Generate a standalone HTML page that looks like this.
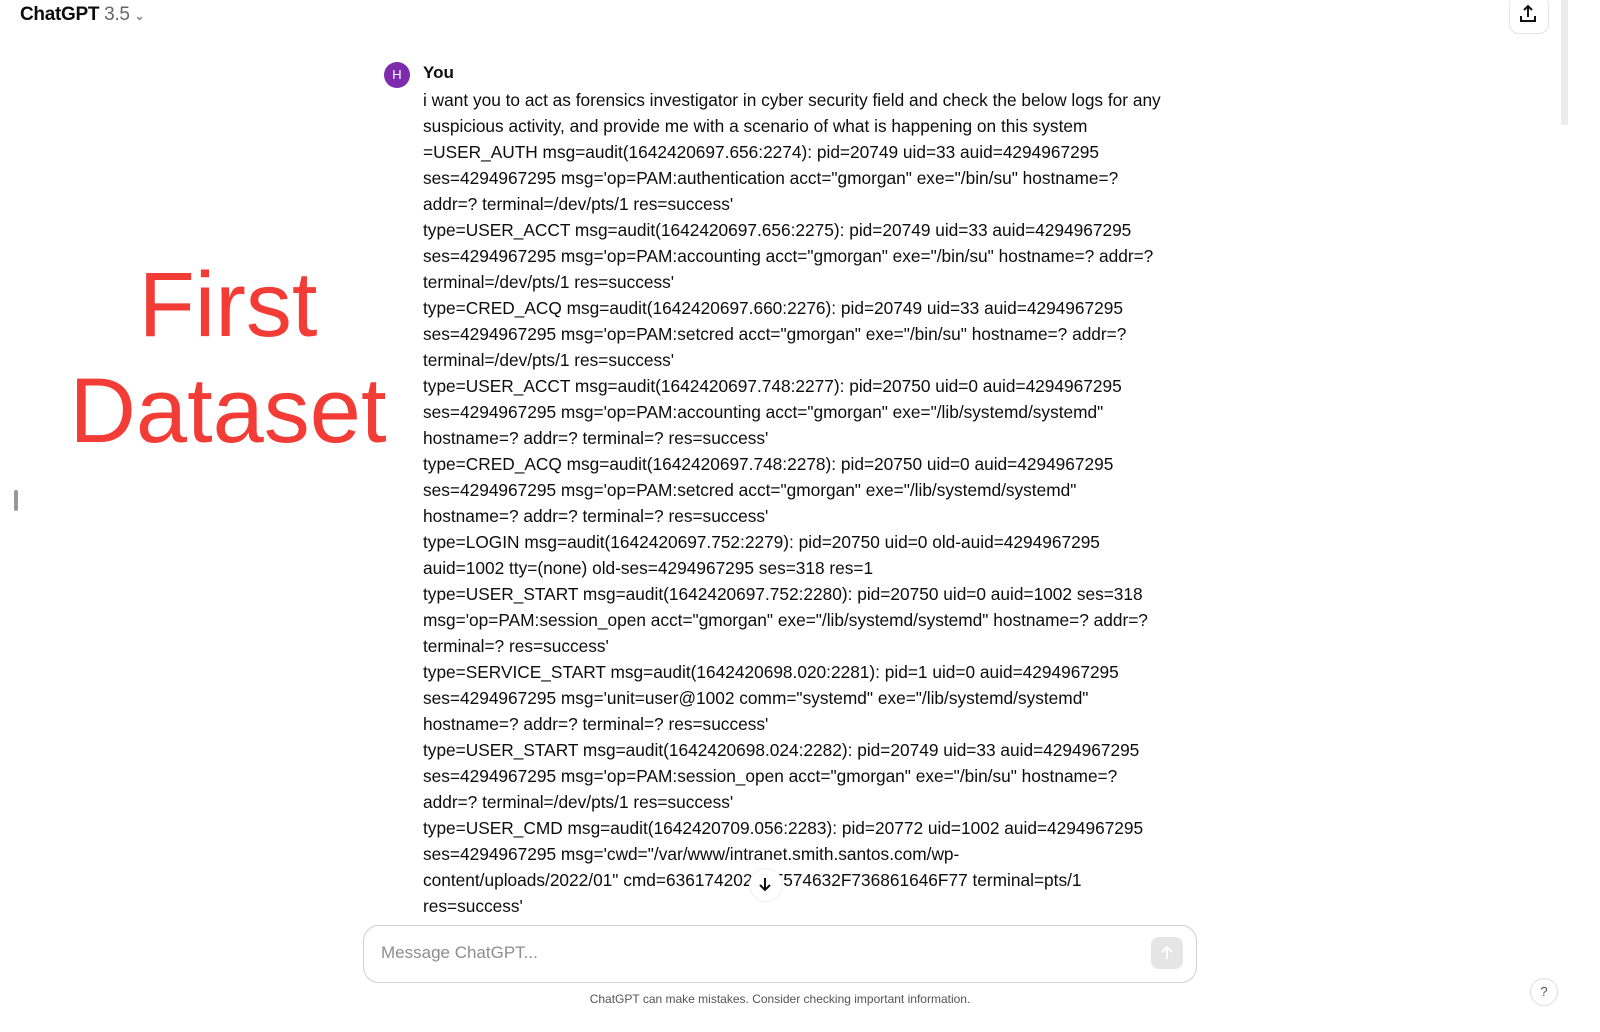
<!DOCTYPE html>
<html><head><meta charset="utf-8"><style>
body{margin:0;width:1600px;height:1032px;background:#fff;font-family:"Liberation Sans",sans-serif;color:#0d0d0d;position:relative;overflow:hidden}
.l{position:absolute;left:423px;font-size:17.3px;white-space:nowrap;line-height:26px;letter-spacing:0}
</style></head><body>
<div style="position:absolute;left:20px;top:4px;font-size:19px;font-weight:bold;letter-spacing:-0.3px">ChatGPT <span style="color:#666;font-weight:normal">3.5</span> <span style="color:#888;font-size:12px">&#8964;</span></div>
<div style="position:absolute;left:1509px;top:-6px;width:38px;height:38px;border:1px solid #e5e5e5;border-radius:10px"></div>
<svg style="position:absolute;left:1519px;top:4px" width="18" height="20" viewBox="0 0 18 20"><path d="M9 2v11M5 6l4-4 4 4M2 12v5h14v-5" fill="none" stroke="#111" stroke-width="2"/></svg>
<div style="position:absolute;left:1561px;top:0;width:7px;height:125px;background:#ececec"></div>
<div style="position:absolute;left:14px;top:490px;width:4px;height:21px;background:#999;border-radius:2px"></div>
<div style="position:absolute;left:68px;top:252px;width:320px;text-align:center;color:#f33c36;font-size:92px;line-height:106px">First<br>Dataset</div>
<div style="position:absolute;left:384px;top:62px;width:26px;height:26px;border-radius:50%;background:#7b2bab;color:#fff;font-size:13px;text-align:center;line-height:26px">H</div>
<div style="position:absolute;left:423px;top:63px;font-size:17px;font-weight:bold">You</div>
<div class="l" style="top:87px">i want you to act as forensics investigator in cyber security field and check the below logs for any</div>
<div class="l" style="top:113px">suspicious activity, and provide me with a scenario of what is happening on this system</div>
<div class="l" style="top:139px">=USER_AUTH msg=audit(1642420697.656:2274): pid=20749 uid=33 auid=4294967295</div>
<div class="l" style="top:165px">ses=4294967295 msg='op=PAM:authentication acct="gmorgan" exe="/bin/su" hostname=?</div>
<div class="l" style="top:191px">addr=? terminal=/dev/pts/1 res=success'</div>
<div class="l" style="top:217px">type=USER_ACCT msg=audit(1642420697.656:2275): pid=20749 uid=33 auid=4294967295</div>
<div class="l" style="top:243px">ses=4294967295 msg='op=PAM:accounting acct="gmorgan" exe="/bin/su" hostname=? addr=?</div>
<div class="l" style="top:269px">terminal=/dev/pts/1 res=success'</div>
<div class="l" style="top:295px">type=CRED_ACQ msg=audit(1642420697.660:2276): pid=20749 uid=33 auid=4294967295</div>
<div class="l" style="top:321px">ses=4294967295 msg='op=PAM:setcred acct="gmorgan" exe="/bin/su" hostname=? addr=?</div>
<div class="l" style="top:347px">terminal=/dev/pts/1 res=success'</div>
<div class="l" style="top:373px">type=USER_ACCT msg=audit(1642420697.748:2277): pid=20750 uid=0 auid=4294967295</div>
<div class="l" style="top:399px">ses=4294967295 msg='op=PAM:accounting acct="gmorgan" exe="/lib/systemd/systemd"</div>
<div class="l" style="top:425px">hostname=? addr=? terminal=? res=success'</div>
<div class="l" style="top:451px">type=CRED_ACQ msg=audit(1642420697.748:2278): pid=20750 uid=0 auid=4294967295</div>
<div class="l" style="top:477px">ses=4294967295 msg='op=PAM:setcred acct="gmorgan" exe="/lib/systemd/systemd"</div>
<div class="l" style="top:503px">hostname=? addr=? terminal=? res=success'</div>
<div class="l" style="top:529px">type=LOGIN msg=audit(1642420697.752:2279): pid=20750 uid=0 old-auid=4294967295</div>
<div class="l" style="top:555px">auid=1002 tty=(none) old-ses=4294967295 ses=318 res=1</div>
<div class="l" style="top:581px">type=USER_START msg=audit(1642420697.752:2280): pid=20750 uid=0 auid=1002 ses=318</div>
<div class="l" style="top:607px">msg='op=PAM:session_open acct="gmorgan" exe="/lib/systemd/systemd" hostname=? addr=?</div>
<div class="l" style="top:633px">terminal=? res=success'</div>
<div class="l" style="top:659px">type=SERVICE_START msg=audit(1642420698.020:2281): pid=1 uid=0 auid=4294967295</div>
<div class="l" style="top:685px">ses=4294967295 msg='unit=user@1002 comm="systemd" exe="/lib/systemd/systemd"</div>
<div class="l" style="top:711px">hostname=? addr=? terminal=? res=success'</div>
<div class="l" style="top:737px">type=USER_START msg=audit(1642420698.024:2282): pid=20749 uid=33 auid=4294967295</div>
<div class="l" style="top:763px">ses=4294967295 msg='op=PAM:session_open acct="gmorgan" exe="/bin/su" hostname=?</div>
<div class="l" style="top:789px">addr=? terminal=/dev/pts/1 res=success'</div>
<div class="l" style="top:815px">type=USER_CMD msg=audit(1642420709.056:2283): pid=20772 uid=1002 auid=4294967295</div>
<div class="l" style="top:841px">ses=4294967295 msg='cwd="/var/www/intranet.smith.santos.com/wp-</div>
<div class="l" style="top:867px">content/uploads/2022/01" cmd=636174202F2F574632F736861646F77 terminal=pts/1</div>
<div class="l" style="top:893px">res=success'</div>
<div style="position:absolute;left:749px;top:868px;width:32px;height:32px;border-radius:50%;background:#fff;border:1px solid #eee"></div>
<svg style="position:absolute;left:757px;top:876px" width="16" height="16" viewBox="0 0 16 16"><path d="M8 2v12M3 9l5 5 5-5" fill="none" stroke="#111" stroke-width="2"/></svg>
<div style="position:absolute;left:363px;top:925px;width:832px;height:56px;border:1px solid #d0d0d0;border-radius:16px;background:#fff"></div>
<div style="position:absolute;left:381px;top:943px;font-size:17px;color:#8e8e8e">Message ChatGPT...</div>
<div style="position:absolute;left:1151px;top:937px;width:32px;height:32px;border-radius:8px;background:#e5e5e5"></div>
<svg style="position:absolute;left:1159px;top:945px" width="16" height="16" viewBox="0 0 16 16"><path d="M8 14V2M3 7l5-5 5 5" fill="none" stroke="#fff" stroke-width="2"/></svg>
<div style="position:absolute;left:0;width:1560px;top:992px;text-align:center;font-size:12px;color:#555">ChatGPT can make mistakes. Consider checking important information.</div>
<div style="position:absolute;left:1530px;top:978px;width:26px;height:26px;border-radius:50%;border:1px solid #ddd;text-align:center;line-height:26px;font-size:13px;color:#555">?</div>
</body></html>
